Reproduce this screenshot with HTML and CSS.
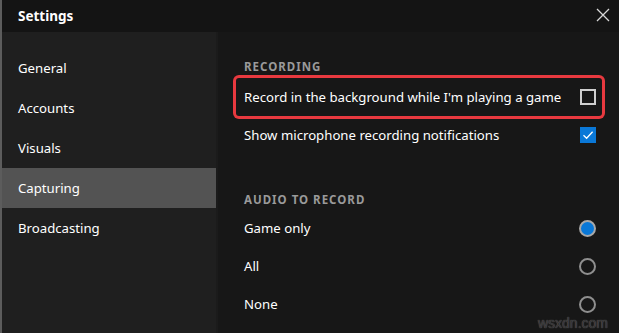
FILE: index.html
```html
<!DOCTYPE html>
<html>
<head>
<meta charset="utf-8">
<link rel="stylesheet" href="styles.css">
</head>
<body>
<div class="window">
  <header class="titlebar">
    <span class="title">Settings</span>
    <svg class="close" width="14" height="14" viewBox="0 0 14 14"><path d="M1 1 L13 13 M13 1 L1 13" stroke="#d8d8d8" stroke-width="1.3" fill="none"/></svg>
  </header>
  <div class="body">
    <nav class="sidebar">
      <div class="nav-item">General</div>
      <div class="nav-item">Accounts</div>
      <div class="nav-item">Visuals</div>
      <div class="nav-item active">Capturing</div>
      <div class="nav-item">Broadcasting</div>
    </nav>
    <main class="content">
      <div class="section-title">RECORDING</div>
      <div class="row highlight">
        <span>Record in the background while I'm playing a game</span>
        <span class="checkbox"></span>
      </div>
      <div class="row">
        <span>Show microphone recording notifications</span>
        <span class="checkbox checked"><svg width="16" height="16" viewBox="0 0 16 16"><path d="M3.5 8.3 L6.6 11.3 L12.6 4.8" stroke="#fff" stroke-width="1.3" fill="none"/></svg></span>
      </div>
      <div class="section-title second">AUDIO TO RECORD</div>
      <div class="row">
        <span>Game only</span>
        <span class="radio selected"></span>
      </div>
      <div class="row">
        <span>All</span>
        <span class="radio"></span>
      </div>
      <div class="row">
        <span>None</span>
        <span class="radio"></span>
      </div>
      <div class="watermark">wsxdn.com</div>
    </main>
  </div>
</div>
</body>
</html>
```
FILE: styles.css
```css
* { box-sizing: border-box; }
html, body { margin: 0; padding: 0; }
body {
  width: 619px;
  height: 333px;
  overflow: hidden;
  background: #171717;
  font-family: "Noto Sans", "Open Sans", sans-serif;
  color: #ffffff;
}
.window {
  width: 619px;
  height: 333px;
  display: flex;
  flex-direction: column;
  border-left: 2px solid #5c5c5c;
  background: #171717;
}
.titlebar {
  height: 32px;
  flex: 0 0 32px;
  background: #141414;
  display: flex;
  align-items: center;
  justify-content: space-between;
  padding: 0 9px 0 16px;
}
.title {
  font-weight: 700;
  font-size: 13.5px;
  color: #fff;
}
.close { margin-top: -3px; }
.body {
  flex: 1;
  display: flex;
  position: relative;
}
.sidebar {
  width: 216px;
  background: #1f1f1f;
  padding-top: 16px;
  border-right: 2px solid #1b1b1b;
}
.nav-item {
  height: 40px;
  line-height: 41px;
  padding-left: 16px;
  font-size: 13.2px;
  color: #fff;
  white-space: nowrap;
}
.nav-item.active { background: #535353; }
.content {
  flex: 1;
  padding: 26px 17px 0 18px;
  position: relative;
}
.section-title {
  font-size: 11.5px;
  font-weight: 700;
  letter-spacing: 1px;
  color: #9a9a9a;
  height: 18px;
  line-height: 18px;
  margin-left: 8px;
  margin-bottom: 2px;
}
.section-title.second { margin-top: 37px; margin-bottom: 0; }
.row {
  height: 38px;
  display: flex;
  align-items: center;
  justify-content: space-between;
  padding: 0 6px 0 8px;
  font-size: 13.2px;
  color: #fff;
  white-space: nowrap;
}
.row.highlight {
  box-shadow: 0 0 0 3px #e8393f;
  border-radius: 3px;
}
.checkbox {
  width: 16px;
  height: 16px;
  border: 2px solid #cfcfcf;
  display: block;
  flex: 0 0 16px;
}
.checkbox.checked {
  border: none;
  background: #0a78d7;
}
.checkbox svg { display: block; }
.radio {
  width: 17px;
  height: 17px;
  flex: 0 0 17px;
  border-radius: 50%;
  border: 2px solid #8f8f8f;
  display: block;
}
.radio.selected {
  border-color: #a8a8a8;
  background: #0a78d7;
}
.watermark {
  position: absolute;
  right: 11px;
  bottom: 2px;
  font-family: "Liberation Sans", sans-serif;
  font-size: 14px;
  color: #333;
  text-shadow: 0 0 1px #777;
}
```
